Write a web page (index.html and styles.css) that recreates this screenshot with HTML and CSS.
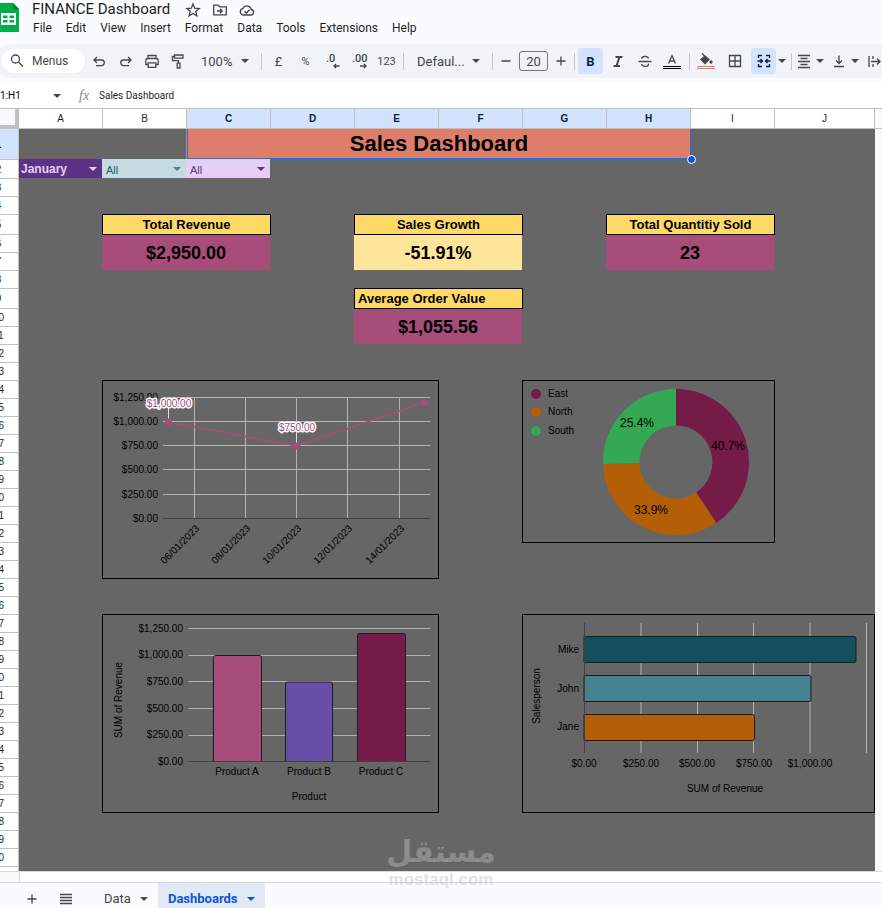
FILE: index.html
```html
<!DOCTYPE html>
<html lang="en">
<head>
    <meta charset="UTF-8">
    <meta name="viewport" content="width=device-width, initial-scale=1.0">
    <title>FINANCE Dashboard</title>
    <link rel="stylesheet" href="styles.css">
</head>
<body>
    <header class="top">
        <svg class="logo" viewBox="0 0 22 30" width="22" height="30" aria-hidden="true">
            <path d="M0 1h15l6 6v22a2 2 0 0 1-2 2H0z" fill="#00ac47"/>
            <path d="M15 1l6 6h-6z" fill="#00832d"/>
            <path d="M3 11h15v12H3zM5 13.500v2.500h4.500v-2.500zM11.500 13.500v2.500H16v-2.500zM5 18v2.500h4.500V18zM11.500 18v2.500H16V18z" fill="#fff" fill-rule="evenodd"/>
        </svg>
        <div class="doc">
            <div class="doc-title">
                <h1>FINANCE Dashboard</h1>
                <button aria-label="Star"><svg viewBox="0 0 16 16" width="16" height="16"><path d="M8 2l1.700 4.200 4.500.3-3.500 2.900 1.200 4.400L8 11.400l-3.900 2.400 1.200-4.400-3.500-2.900 4.500-.3z"/></svg></button>
                <button aria-label="Move"><svg viewBox="0 0 16 16" width="16" height="16"><path d="M1.700 3.200h4.500l1.500 1.700h6.600v8H1.700zM5 9h5M8 6.800L10.300 9 8 11.200"/></svg></button>
                <button aria-label="See document status"><svg viewBox="0 0 16 16" width="16" height="16"><path d="M4.200 13a3.200 3.200 0 0 1-.4-6.300 4.400 4.400 0 0 1 8.400.8 2.800 2.800 0 0 1 .2 5.500zM5.600 9.200l1.800 1.800 3.200-3.200"/></svg></button>
            </div>
            <nav class="menu">
                <button>File</button>
                <button>Edit</button>
                <button>View</button>
                <button>Insert</button>
                <button>Format</button>
                <button>Data</button>
                <button>Tools</button>
                <button>Extensions</button>
                <button>Help</button>
            </nav>
        </div>
    </header>

    <div class="toolbar">
        <button class="search"><svg viewBox="0 0 18 18" width="18" height="18"><circle cx="7.500" cy="7" r="4"/><path d="M10.500 10l4.500 4.500"/></svg>Menus</button>
        <div class="group tight">
            <button class="tool" aria-label="Undo"><svg viewBox="0 0 18 18" width="18" height="18"><path d="M6 5L3 8l3 3M3 8h7.500a2.800 2.800 0 0 1 0 5.600H5"/></svg></button>
            <button class="tool" aria-label="Redo"><svg viewBox="0 0 18 18" width="18" height="18"><path d="M11 5l3 3-3 3M14 8H6.500a2.800 2.800 0 0 0 0 5.600H12"/></svg></button>
            <button class="tool" aria-label="Print"><svg viewBox="0 0 18 18" width="18" height="18"><path d="M5 6.500V3.500h8v3M5 12.500H2.800V8.500a2 2 0 0 1 2-2h8.400a2 2 0 0 1 2 2v4H13M5.200 10.800h7.600v4.500H5.200z"/></svg></button>
            <button class="tool" aria-label="Paint format"><svg viewBox="0 0 18 18" width="18" height="18"><path d="M5.500 3h8.500v3.200H5.500zM5.500 4.500H3.500v4.200h6v2.500M8.200 11.200h2.800V16H8.200z"/></svg></button>
        </div>
        <label class="picker zoom"><select aria-label="Zoom"><option>100%</option></select></label>
        <span class="sep"></span>
        <div class="group tight">
            <button class="tool">£</button>
            <button class="tool small">%</button>
            <button class="tool" aria-label="Decrease decimal places"><svg viewBox="0 0 18 18" width="18" height="18"><text x="2" y="10">.0</text><path d="M15.500 14H10M12 12l-2 2 2 2"/></svg></button>
            <button class="tool" aria-label="Increase decimal places"><svg viewBox="0 0 18 18" width="18" height="18"><text x="1" y="10">.00</text><path d="M9 14h6M13 12l2 2-2 2"/></svg></button>
            <button class="tool small">123</button>
        </div>
        <span class="sep"></span>
        <label class="picker font"><select aria-label="Font"><option>Defaul...</option></select></label>
        <span class="sep"></span>
        <button class="step" aria-label="Decrease font size"><svg viewBox="0 0 18 18" width="18" height="18"><path d="M4.500 9h9"/></svg></button>
        <input class="size" type="text" value="20" aria-label="Font size">
        <button class="step" aria-label="Increase font size"><svg viewBox="0 0 18 18" width="18" height="18"><path d="M4.500 9h9M9 4.500v9"/></svg></button>
        <span class="sep"></span>
        <div class="group">
            <button class="tool on"><b>B</b></button>
            <button class="tool" aria-label="Italic"><svg viewBox="0 0 18 18" width="18" height="18"><path class="thick" d="M6.500 5h7M4.500 14h6.500M10.500 5L7.500 14"/></svg></button>
            <button class="tool" aria-label="Strikethrough"><svg viewBox="0 0 18 18" width="18" height="18"><path d="M2.500 9.500h13M12.500 6.500c-.3-1.500-1.500-2.200-3.400-2.200-2 0-3.300.8-3.300 2.400M5.600 12c.3 1.600 1.500 2.300 3.500 2.300s3.500-.8 3.500-2.600"/></svg></button>
            <button class="tool" aria-label="Text color"><svg viewBox="0 0 20 18" width="20" height="18"><path d="M6.500 11.500l3.500-8 3.500 8M7.700 9h4.600"/><path class="swatch" d="M1 14.500h18M1 16.500h18" stroke="#000"/></svg></button>
        </div>
        <span class="sep"></span>
        <div class="group wide">
            <button class="tool" aria-label="Fill color"><svg viewBox="0 0 20 18" width="20" height="18"><path d="M5 7.500l4-3.500 4 3.500-4 4z" fill="#444746"/><path d="M6 1.500l4 4"/><circle cx="15" cy="10" r="1" fill="#444746"/><path class="swatch" d="M1 14.500h18M1 16.500h18" stroke="#dd7e6b"/></svg></button>
            <button class="tool" aria-label="Borders"><svg viewBox="0 0 18 18" width="18" height="18"><path d="M3.500 3.500h11v11h-11zM9 3.500v11M3.500 9h11"/></svg></button>
            <button class="tool on" aria-label="Merge cells"><svg viewBox="0 0 18 18" width="18" height="18"><path d="M7 3.500H3.500V6M11 3.500h3.500V6M7 14.500H3.500V12M11 14.500h3.500V12M2.500 9H7M5.500 7l2 2-2 2M15.500 9H11M12.500 7l-2 2 2 2"/></svg></button>
        </div>
        <button class="drop" aria-label="Merge type"></button>
        <span class="sep"></span>
        <button class="tool menu-tool" aria-label="Horizontal align"><svg viewBox="0 0 18 18" width="18" height="18"><path d="M3 3.500h12M5.500 6.500h7M3 9.500h12M5.500 12.500h7M3 15.500h12"/></svg></button>
        <button class="tool menu-tool" aria-label="Vertical align"><svg viewBox="0 0 18 18" width="18" height="18"><path d="M9 3.500v8M6 8.500l3 3 3-3M4 14.500h10"/></svg></button>
        <button class="tool menu-tool" aria-label="Text wrapping"><svg viewBox="0 0 18 18" width="18" height="18"><path d="M4 4v11M6 9.500h9M12 6.500l3 3-3 3M8 4v3M8 12v3"/></svg></button>
    </div>

    <div class="formula">
        <label class="name-box"><input type="text" value="1:H1" aria-label="Cell range"></label>
        <i class="fx">fx</i>
        <input class="formula-text" type="text" value="Sales Dashboard" aria-label="Formula">
    </div>

    <main class="sheet">
        <div class="corner"></div>
        <div class="col-heads columns">
            <span>A</span><span>B</span><span class="picked">C</span><span class="picked">D</span><span class="picked">E</span><span class="picked">F</span><span class="picked">G</span><span class="picked">H</span><span>I</span><span>J</span><span class="past"></span>
        </div>
        <div class="row-heads rows">
            <span class="picked">1</span><span>2</span><span>3</span><span>4</span><span>5</span><span>6</span><span>7</span><span>8</span><span>9</span><span>10</span>
            <span>11</span><span>12</span><span>13</span><span>14</span><span>15</span><span>16</span><span>17</span><span>18</span><span>19</span><span>20</span>
            <span>21</span><span>22</span><span>23</span><span>24</span><span>25</span><span>26</span><span>27</span><span>28</span><span>29</span><span>30</span>
            <span>31</span><span>32</span><span>33</span><span>34</span><span>35</span><span>36</span><span>37</span><span>38</span><span>39</span><span>40</span><span></span>
        </div>
        <div class="cells columns rows">
            <h2 class="banner">Sales Dashboard<span class="handle"></span></h2>

            <label class="filter month"><select aria-label="Month"><option>January</option></select></label>
            <label class="filter region"><select aria-label="Region"><option>All</option></select></label>
            <label class="filter product"><select aria-label="Product"><option>All</option></select></label>

            <div class="kpi revenue">
                <h3>Total Revenue</h3>
                <p>$2,950.00</p>
            </div>
            <div class="kpi growth">
                <h3>Sales Growth</h3>
                <p>-51.91%</p>
            </div>
            <div class="kpi quantity">
                <h3>Total Quantitiy Sold</h3>
                <p>23</p>
            </div>
            <div class="kpi average">
                <h3>Average Order Value</h3>
                <p>$1,055.56</p>
            </div>

            <figure class="chart by-date">
                <svg viewBox="0 0 335 197">
                    <path class="grid" d="M60 16.500h267.500M60 40.500h267.500M60 64.500h267.500M60 88.500h267.500M60 113.500h267.500M91.500 16v121M142.500 16v121M193.500 16v121M244.500 16v121M296.500 16v121"/>
                    <path class="axis" d="M60 137.500h267.500"/>
                    <g class="end">
                        <text x="55" y="20">$1,250.00</text>
                        <text x="55" y="44">$1,000.00</text>
                        <text x="55" y="68">$750.00</text>
                        <text x="55" y="92">$500.00</text>
                        <text x="55" y="117">$250.00</text>
                        <text x="55" y="141">$0.00</text>
                        <text transform="translate(97 148) rotate(-45)">06/01/2023</text>
                        <text transform="translate(148 148) rotate(-45)">08/01/2023</text>
                        <text transform="translate(199 148) rotate(-45)">10/01/2023</text>
                        <text transform="translate(250 148) rotate(-45)">12/01/2023</text>
                        <text transform="translate(302 148) rotate(-45)">14/01/2023</text>
                    </g>
                    <path class="leader" d="M65.500 27v14M193.500 51v14"/>
                    <path class="trend" d="M65.500 41L193.500 65l128-43.500"/>
                    <g fill="#a64d79">
                        <circle cx="65.500" cy="41" r="3.500"/>
                        <circle cx="193.500" cy="65" r="3.500"/>
                        <circle cx="321.500" cy="21.500" r="3.500"/>
                    </g>
                    <g class="middle point-label">
                        <text x="66" y="26">$1,000.00</text>
                        <text x="194" y="50">$750.00</text>
                    </g>
                </svg>
            </figure>

            <figure class="chart by-region">
                <svg viewBox="0 0 251 161">
                    <path fill="#741b47" d="M153 8A73 73 0 0 1 193.300 141.900L173.100 111.400A36.500 36.500 0 0 0 153 44.500z"/>
                    <path fill="#b45f06" d="M193.300 141.900A73 73 0 0 1 80 82.900L116.500 82A36.500 36.500 0 0 0 173.100 111.400z"/>
                    <path fill="#34a853" d="M80 82.900A73 73 0 0 1 153 8V44.500A36.500 36.500 0 0 0 116.500 82z"/>
                    <g class="middle slice-label">
                        <text x="205" y="69">40.7%</text>
                        <text x="128" y="133">33.9%</text>
                        <text x="114" y="46">25.4%</text>
                    </g>
                    <circle cx="13" cy="13" r="5" fill="#741b47"/>
                    <circle cx="13" cy="31" r="5" fill="#b45f06"/>
                    <circle cx="13" cy="50" r="5" fill="#34a853"/>
                    <text x="25" y="16">East</text>
                    <text x="25" y="34">North</text>
                    <text x="25" y="53">South</text>
                </svg>
            </figure>

            <figure class="chart by-product">
                <svg viewBox="0 0 335 197">
                    <path class="grid" d="M85.500 13.500h242M85.500 40.500h242M85.500 66.500h242M85.500 93.500h242M85.500 120.500h242"/>
                    <path class="bar" fill="#a64d79" d="M110.500 146.500V42.500a2 2 0 0 1 2-2h44a2 2 0 0 1 2 2v104z"/>
                    <path class="bar" fill="#674ea7" d="M182.500 146.500V69a2 2 0 0 1 2-2h43a2 2 0 0 1 2 2v77.500z"/>
                    <path class="bar" fill="#741b47" d="M254.500 146.500V20.500a2 2 0 0 1 2-2h44a2 2 0 0 1 2 2v126z"/>
                    <path class="axis" d="M85.500 146.500h242"/>
                    <g class="end">
                        <text x="80" y="17">$1,250.00</text>
                        <text x="80" y="43">$1,000.00</text>
                        <text x="80" y="70">$750.00</text>
                        <text x="80" y="97">$500.00</text>
                        <text x="80" y="123">$250.00</text>
                        <text x="80" y="150">$0.00</text>
                    </g>
                    <g class="middle">
                        <text x="134" y="160">Product A</text>
                        <text x="206" y="160">Product B</text>
                        <text x="278" y="160">Product C</text>
                        <text x="206" y="185">Product</text>
                        <text transform="translate(19 85) rotate(-90)">SUM of Revenue</text>
                    </g>
                </svg>
            </figure>

            <figure class="chart by-person">
                <svg viewBox="0 0 351 197">
                    <path class="grid" d="M118 8v130M174.500 8v130M230.500 8v130M287 8v130M343.500 8v130"/>
                    <path class="bar" fill="#134f5c" d="M61 21.500h270a2 2 0 0 1 2 2v22a2 2 0 0 1-2 2H61z"/>
                    <path class="bar" fill="#45818e" d="M61 60.500h225a2 2 0 0 1 2 2v22a2 2 0 0 1-2 2H61z"/>
                    <path class="bar" fill="#b45f06" d="M61 99.500h168.500a2 2 0 0 1 2 2v22a2 2 0 0 1-2 2H61z"/>
                    <path class="axis" d="M61.500 8v130"/>
                    <g class="end">
                        <text x="56" y="38">Mike</text>
                        <text x="56" y="77">John</text>
                        <text x="56" y="115">Jane</text>
                    </g>
                    <g class="middle">
                        <text x="61" y="152">$0.00</text>
                        <text x="118" y="152">$250.00</text>
                        <text x="174" y="152">$500.00</text>
                        <text x="231" y="152">$750.00</text>
                        <text x="287" y="152">$1,000.00</text>
                        <text x="202" y="177">SUM of Revenue</text>
                        <text transform="translate(17 81) rotate(-90)">Salesperson</text>
                    </g>
                </svg>
            </figure>
        </div>
    </main>
    <div class="scroll-strip"><span></span></div>

    <footer class="tabs">
        <button class="icon" aria-label="Add sheet"><svg viewBox="0 0 18 18" width="18" height="18"><path d="M4.500 9h9M9 4.500v9"/></svg></button>
        <button class="icon" aria-label="All sheets"><svg viewBox="0 0 18 18" width="18" height="18"><path d="M3 4.500h12M3 7.500h12M3 10.500h12M3 13.500h12"/></svg></button>
        <button class="tab">Data</button>
        <button class="tab active">Dashboards</button>
        <div class="watermark"><span lang="ar">مستقل</span><span>mostaql.com</span></div>
    </footer>
</body>
</html>
```
FILE: styles.css
```css
* {
    box-sizing: border-box;
}

body {
    margin: 0;
    height: 100vh;
    overflow: hidden;
    display: flex;
    flex-direction: column;
    background-color: #f9fbfd;
    color: #1f1f1f;
    font-family: Roboto, "Liberation Sans", sans-serif;
    font-size: 13px;
}

body > * {
    flex-shrink: 0;
}

h1, h2, h3, p, figure {
    margin: 0;
}

button, input, select {
    margin: 0;
    padding: 0;
    border: none;
    border-radius: 0;
    background: none;
    color: inherit;
    font: inherit;
    appearance: none;
}

/* header */
.top {
    display: flex;
    height: 44px;
}

.logo {
    margin: 2px 12px 0 -2px;
}

.doc-title {
    display: flex;
    align-items: center;
    height: 19px;
}

.doc-title h1 {
    margin-right: 15px;
    font-size: 15px;
    font-weight: 400;
    line-height: 19px;
}

.doc-title button {
    height: 16px;
    margin-right: 11px;
}

.doc-title svg, .toolbar svg, .tabs svg {
    stroke-width: 1.3;
}

.doc-title svg {
    fill: none;
    stroke: #444746;
}

.menu {
    display: flex;
    margin-left: -6px;
}

.menu button {
    padding: 0 7px;
    font-size: 12px;
    line-height: 18px;
}

/* toolbar */
.toolbar {
    display: flex;
    align-items: center;
    height: 34px;
    margin: 0 -20px 5px -5px;
    padding-left: 7px;
    border-radius: 17px;
    background-color: #f0f4f9;
    color: #444746;
    overflow: hidden;
}

.toolbar > * {
    flex-shrink: 0;
}

.toolbar svg {
    display: block;
    fill: none;
    stroke: currentColor;
}

.toolbar svg text {
    font-size: 11px;
    font-weight: 500;
    fill: currentColor;
    stroke: none;
}

.toolbar .thick {
    stroke-width: 2;
}

.toolbar .swatch {
    stroke-width: 1;
}

.search {
    display: flex;
    align-items: center;
    gap: 6px;
    width: 83px;
    height: 24px;
    margin-right: 2px;
    padding-left: 6px;
    border-radius: 12px;
    background-color: #fff;
    font-size: 12px;
}

.group {
    display: flex;
    gap: 2px;
    padding-right: 2px;
}

.group.tight {
    gap: 0;
    padding-right: 0;
}

.group.wide {
    gap: 4px;
    padding-right: 0;
}

.tool {
    display: flex;
    align-items: center;
    justify-content: center;
    width: 25px;
    height: 26px;
    border-radius: 3px;
}

.tight .tool {
    width: 27px;
}

.search + .tight .tool {
    width: 26px;
}

.tool.small {
    font-size: 11px;
}

.tool.on {
    background-color: #d3e3fd;
    color: #041e49;
}

.sep {
    width: 1px;
    height: 17px;
    margin: 0 3px;
    background-color: #c7c7c7;
}

.picker, .name-box, .filter {
    position: relative;
    display: flex;
}

.picker::after, .name-box::after, .filter::after, .drop::after, .menu-tool::after, .tab::after {
    content: "";
    border: 4px solid transparent;
    border-top-color: currentColor;
    border-bottom: none;
}

.picker::after, .name-box::after, .filter::after {
    position: absolute;
    right: 9px;
    top: 50%;
    margin-top: -2px;
    pointer-events: none;
}

.picker select {
    width: 100%;
    padding-left: 10px;
}

.zoom {
    width: 67px;
}

.font {
    width: 82px;
}

.step {
    display: flex;
    justify-content: center;
    width: 20px;
}

.size {
    width: 29px;
    height: 20px;
    margin: 0 3px;
    border: 1px solid #747775;
    border-radius: 3px;
    text-align: center;
}

.drop {
    display: flex;
    justify-content: center;
    width: 12px;
}

.menu-tool {
    width: 35px;
    gap: 3px;
    justify-content: flex-start;
}

/* formula bar */
.formula {
    display: flex;
    align-items: center;
    height: 26px;
    border-bottom: 1px solid #c0c0c0;
    background-color: #fff;
    font-size: 10px;
}

.name-box {
    width: 70px;
    color: #444746;
}

.name-box input {
    width: 50px;
    color: #000;
}

.fx {
    width: 20px;
    margin-left: 9px;
    color: #80868b;
    font-family: "Liberation Serif", serif;
    font-size: 14px;
}

.formula-text {
    flex: 1;
}

/* sheet */
.sheet {
    display: grid;
    grid-template-columns: 40px 1fr;
    grid-template-rows: 20px auto;
    margin-left: -21px;
    background-color: #f9f9f8;
    font-family: "Liberation Sans", Arial, sans-serif;
}

.columns {
    display: grid;
    grid-template-columns: 83px repeat(8, 84px) 100px 1fr;
}

.rows {
    display: grid;
    grid-template-rows: 30px 19px 18px 18px 20px 18px 18px 18px 20px repeat(31, 18px) 5px;
}

.corner {
    border: solid #c0c0c0;
    border-width: 0 4px 4px 0;
    background-color: #f8f9fa;
}

.col-heads {
    border-bottom: 1px solid #c0c0c0;
    background-color: #fff;
    font-size: 10px;
    line-height: 19px;
    text-align: center;
}

.col-heads span + span {
    border-left: 1px solid #c0c0c0;
}

.col-heads .past {
    background-color: #f9f9f8;
}

.row-heads {
    border-right: 1px solid #c0c0c0;
    background-color: #fff;
    font-size: 10px;
}

.row-heads span {
    display: flex;
    align-items: center;
    justify-content: center;
}

.row-heads span + span {
    border-top: 1px solid #c0c0c0;
}

.sheet .picked {
    background-color: #d3e3fd;
    color: #041e49;
    font-weight: 700;
}

.cells {
    margin-right: 7px;
    background-color: #666;
    color: #000;
}

.banner {
    position: relative;
    grid-area: 1 / 3 / 2 / 9;
    display: flex;
    align-items: center;
    justify-content: center;
    margin: 0 -1px -1px 1px;
    border: solid #1a73e8;
    border-width: 0 1px 2px 1px;
    box-shadow: -1px 0 #dd7e6b;
    background-color: #dd7e6b;
    font-size: 22px;
    line-height: 30px;
}

.handle {
    position: absolute;
    right: -6px;
    bottom: -6px;
    width: 9px;
    height: 9px;
    border: 1px solid #fff;
    border-radius: 50%;
    background-color: #0b57d0;
}

.filter {
    grid-row: 2;
    font-size: 11px;
}

.filter::after {
    right: 5px;
}

.filter select {
    width: 100%;
    padding: 3px 0 0 4px;
}

.month {
    grid-column: 1;
    background-color: #5a3286;
    color: #e6cff2;
    font-size: 12px;
    font-weight: 700;
}

.month select {
    padding: 0 0 0 2px;
}

.region {
    grid-column: 2;
    background-color: #c6dbe1;
    color: #215a6c;
}

.region::after {
    border-top-color: #45818e;
}

.product {
    grid-column: 3;
    background-color: #e6cff2;
    color: #5a3286;
}

.kpi {
    display: grid;
    grid-template-rows: 21px 1fr;
    text-align: center;
}

.kpi h3 {
    margin-right: -1px;
    border: 1px solid #000;
    background-color: #ffd966;
    font-size: 13px;
    line-height: 19px;
}

.kpi p {
    height: 35px;
    background-color: #a64d79;
    font-size: 18px;
    font-weight: 700;
    line-height: 37px;
}

.revenue {
    grid-area: 5 / 2 / 8 / 4;
}

.growth {
    grid-area: 5 / 5 / 8 / 7;
}

.growth p {
    background-color: #ffe599;
}

.quantity {
    grid-area: 5 / 8 / 8 / 10;
}

.average {
    grid-area: 9 / 5 / 12 / 7;
}

.average h3 {
    padding-left: 3px;
    text-align: left;
}

/* charts */
.chart {
    margin: 0 -1px -1px 0;
    border: 1px solid #000;
}

.chart svg {
    display: block;
    width: 100%;
    font-size: 10px;
}

.by-date {
    grid-area: 14 / 2 / 25 / 6;
}

.by-region {
    grid-area: 14 / 7 / 23 / 10;
}

.by-product {
    grid-area: 27 / 2 / 38 / 6;
}

.by-person {
    grid-area: 27 / 7 / 38 / 11;
}

.grid {
    stroke: #b3b3b3;
}

.axis {
    stroke: #404040;
}

.bar {
    stroke: #1c1c1c;
}

.leader {
    stroke: #ddd;
}

.trend {
    fill: none;
    stroke: #a64d79;
    stroke-width: 1.5;
}

.end {
    text-anchor: end;
}

.middle {
    text-anchor: middle;
}

.point-label {
    fill: #a64d79;
    stroke: #fff;
    stroke-width: 3;
    stroke-linejoin: round;
    paint-order: stroke;
}

.slice-label {
    font-size: 12px;
}

/* bottom */
.scroll-strip {
    height: 12px;
    border: solid #d9d9d9;
    border-width: 1px 0;
    background-color: #fff;
}

.scroll-strip span {
    display: block;
    width: 20px;
    height: 10px;
    border-right: 1px solid #d9d9d9;
    background-color: #f8f9fa;
}

.tabs {
    position: relative;
    display: flex;
    align-items: stretch;
    height: 31px;
    padding-left: 15px;
    color: #444746;
}

.tabs .icon {
    width: 34px;
}

.tabs svg {
    display: block;
    margin: 0 auto;
    stroke: currentColor;
}

.tab {
    display: flex;
    align-items: center;
    gap: 9px;
    padding: 0 10px;
}

.icon + .tab {
    margin-left: 11px;
}

.tab.active {
    background-color: #e1e9f7;
    color: #0b57d0;
    font-weight: 700;
}

.watermark {
    position: absolute;
    left: 50%;
    bottom: 24px;
    display: flex;
    flex-direction: column;
    align-items: center;
    transform: translateX(-50%);
    color: rgba(190, 190, 190, 0.45);
    font-family: "Liberation Sans", Arial, sans-serif;
    font-size: 17px;
    font-weight: 700;
    line-height: 20px;
}

.watermark span:first-child {
    font-family: "DejaVu Sans", sans-serif;
    font-size: 30px;
    line-height: 36px;
}
```
